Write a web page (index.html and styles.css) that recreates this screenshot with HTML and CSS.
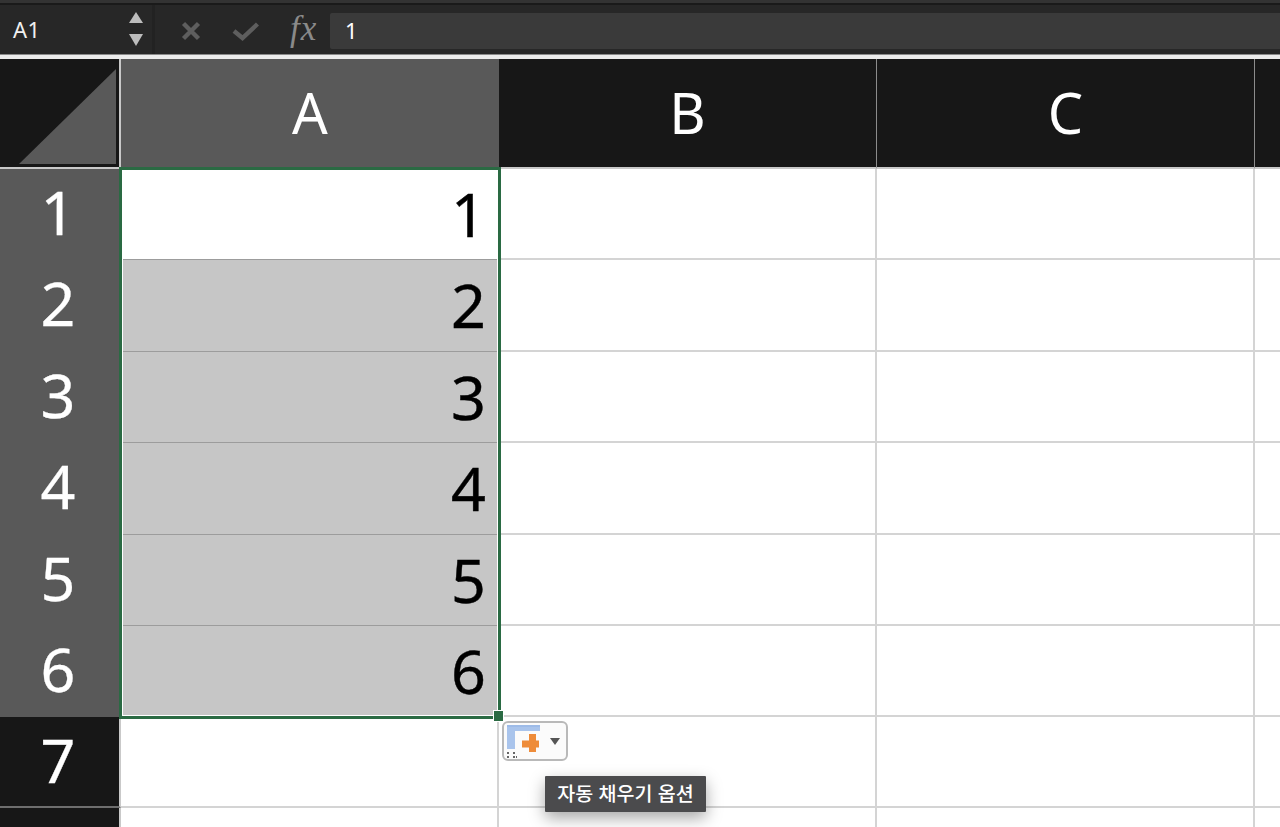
FILE: index.html
```html
<!DOCTYPE html>
<html lang="ko">
<head>
<meta charset="utf-8">
<title>자동 채우기 옵션</title>
<link rel="stylesheet" href="styles.css">
</head>
<body>
<div class="app">
  <div class="topstrip"></div>
  <div class="formula-bar">
    <div class="namebox">
      <span class="cellref">A1</span>
      <div class="spinner">
        <span class="tri-up"></span>
        <span class="tri-down"></span>
      </div>
    </div>
    <div class="fx-tools">
      <svg class="tool-x" width="20" height="20" viewBox="0 0 20 20"><path d="M2.5 2.5L17.5 17.5M17.5 2.5L2.5 17.5" stroke="#5e5e5e" stroke-width="4.4" fill="none"/></svg>
      <svg class="tool-check" width="28" height="20" viewBox="0 0 28 20"><path d="M2 10L10.500 17L25.500 3" stroke="#5e5e5e" stroke-width="4.4" fill="none"/></svg>
      <span class="fx">fx</span>
    </div>
    <div class="formula-input">1</div>
  </div>
  <div class="divider"></div>
  <div class="sheet">
    <div class="corner"><svg class="corner-tri" width="97" height="95" viewBox="0 0 97 95"><path d="M0 95L97 0V95Z" fill="#595959"/></svg></div>
    <div class="colhead active">A</div>
    <div class="colhead">B</div>
    <div class="colhead">C</div>
    <div class="colhead last"></div>

    <div class="rowhead active">1</div><div class="cell a first">1</div><div class="cell"></div><div class="cell"></div><div class="cell last"></div>
    <div class="rowhead active">2</div><div class="cell a sel">2</div><div class="cell"></div><div class="cell"></div><div class="cell last"></div>
    <div class="rowhead active">3</div><div class="cell a sel">3</div><div class="cell"></div><div class="cell"></div><div class="cell last"></div>
    <div class="rowhead active">4</div><div class="cell a sel">4</div><div class="cell"></div><div class="cell"></div><div class="cell last"></div>
    <div class="rowhead active">5</div><div class="cell a sel">5</div><div class="cell"></div><div class="cell"></div><div class="cell last"></div>
    <div class="rowhead active">6</div><div class="cell a sel">6</div><div class="cell"></div><div class="cell"></div><div class="cell last"></div>
    <div class="rowhead">7</div><div class="cell"></div><div class="cell"></div><div class="cell"></div><div class="cell last"></div>
    <div class="rowhead end"></div><div class="cell end"></div><div class="cell end"></div><div class="cell end"></div><div class="cell last end"></div>

    <div class="selection"></div>
    <div class="handle"></div>
    <div class="autofill">
      <svg width="38" height="35" viewBox="0 0 38 35">
        <path d="M3 1H36V7H11V25H3Z" fill="#a9c4ec"/>
        <path d="M3 1H36V3H3Z" fill="#9dbbe8"/>
        <path d="M25 10H32V16.500H35V23.500H32V28H25V23.500H18V16.500H25Z" fill="#ee8c3a"/>
        <path d="M3 28h2v2H3zM9 28h2v2H9zM3 32h2v2H3zM9 32h2v2H9zM12 32h1v2h-1z" fill="#666"/>
      </svg>
      <span class="caret"></span>
    </div>
    <div class="tooltip">자동 채우기 옵션</div>
  </div>
</div>
</body>
</html>
```
FILE: styles.css
```css
* { box-sizing: border-box; }
html, body { margin: 0; padding: 0; height: 100%; overflow: hidden; background: #fff; }
body { font-family: "Noto Sans", "Noto Sans CJK KR", sans-serif; }
.app { width: 1280px; height: 827px; display: flex; flex-direction: column; overflow: hidden; }

.topstrip { height: 5px; background: #1a1a1a; border-top: 3px solid #333; }
.formula-bar { height: 49px; display: flex; background: #272727; align-items: stretch; }
.namebox { width: 155px; display: flex; align-items: center; justify-content: space-between; padding: 0 9px 0 13px; border-right: 3px solid #222; flex: none; }
.cellref { color: #f0f0f0; font-size: 22px; line-height: 1; margin-top: -2px; letter-spacing: .5px; }
.spinner { display: flex; flex-direction: column; gap: 11px; margin-top: -1px; }
.tri-up { width: 0; height: 0; border-left: 7.5px solid transparent; border-right: 7.5px solid transparent; border-bottom: 11px solid #bdbdbd; }
.tri-down { width: 0; height: 0; border-left: 7.5px solid transparent; border-right: 7.5px solid transparent; border-top: 12px solid #bdbdbd; }
.fx-tools { width: 175px; display: flex; align-items: center; padding-left: 26px; flex: none; }
.tool-x { margin-right: 31px; margin-top: 3px; }
.tool-check { margin-right: 30px; margin-top: 3px; }
.fx { color: #8a8a8a; font-family: "Liberation Serif", serif; font-style: italic; font-size: 35px; line-height: 1; margin-top: -3px; letter-spacing: 1px; }
.formula-input { flex: 1; margin: 8px 0 5px; background: #3a3a3a; color: #fff; font-size: 22px; line-height: 34px; padding-left: 15px; border-radius: 2px 0 0 2px; }

.divider { height: 5px; background: #ececec; border-top: 1px solid #8a8a8a; }

.sheet { position: relative; flex: 1; display: grid; grid-template-columns: 121px 378px 378px 378px 1fr; grid-template-rows: 110px repeat(6, 91.4px) 91px 1fr; }
.corner { background: #171717; border-right: 2px solid #c9c9c9; border-bottom: 2px solid #c9c9c9; display: flex; align-items: flex-end; justify-content: flex-end; padding: 0 3px 3px 0; }
.corner-tri { display: block; }
.colhead { background: #171717; color: #fff; font-size: 56px; line-height: 106px; text-align: center; border-right: 1px solid #8c8c8c; border-bottom: 2px solid #c9c9c9; }
.colhead.active { background: #595959; border-right: none; }
.colhead.last { border-right: none; }
.rowhead { background: #171717; color: #fff; font-size: 61px; font-stretch: 92%; line-height: 86px; text-align: center; padding-right: 3px; border-bottom: 2px solid #6e6e6e; border-right: 2px solid #c9c9c9; -webkit-text-stroke: .3px #fff; }
.rowhead.active { background: #595959; border-bottom: none; }
.cell { background: #fff; border-right: 2px solid #d4d4d4; border-bottom: 2px solid #d4d4d4; }
.cell.last { border-right: none; }
.rowhead.end, .cell.end { border-bottom: none; }
.cell.a { font-size: 61px; font-stretch: 92%; color: #000; text-align: right; line-height: 89px; padding-right: 11px; -webkit-text-stroke: .4px #000; }
.cell.sel { background: #c6c6c6; border-bottom: 1px solid #9c9c9c; border-right-color: #fff; }
.cell.first { border-bottom: 1px solid #9c9c9c; border-right-color: #fff; }
.selection { position: absolute; left: 119px; top: 108px; width: 382px; height: 552px; border: 3px solid #2a6a43; pointer-events: none; box-shadow: inset 0 0 0 1px #fff; }
.handle { position: absolute; left: 493px; top: 651px; width: 9px; height: 10px; background: #2a6a43; border: 1px solid #fff; box-sizing: content-box; }
.autofill { position: absolute; left: 502px; top: 662px; width: 66px; height: 40px; background: #fbfbfb; border: 2px solid #b9b9b9; border-radius: 6px; display: flex; align-items: flex-start; overflow: hidden; }
.autofill svg { flex: none; margin-top: 1px; }
.caret { margin: 15px 0 0 8px; width: 0; height: 0; border-left: 5px solid transparent; border-right: 5px solid transparent; border-top: 7px solid #555; }
.tooltip { position: absolute; left: 545px; top: 717px; width: 161px; height: 36px; background: #4b4b4d; color: #fff; font-family: "Noto Sans CJK KR", sans-serif; font-size: 19.500px; font-weight: 500; line-height: 34px; text-align: center; border-radius: 1px; box-shadow: 0 6px 16px rgba(0,0,0,.35); white-space: nowrap; }
```
